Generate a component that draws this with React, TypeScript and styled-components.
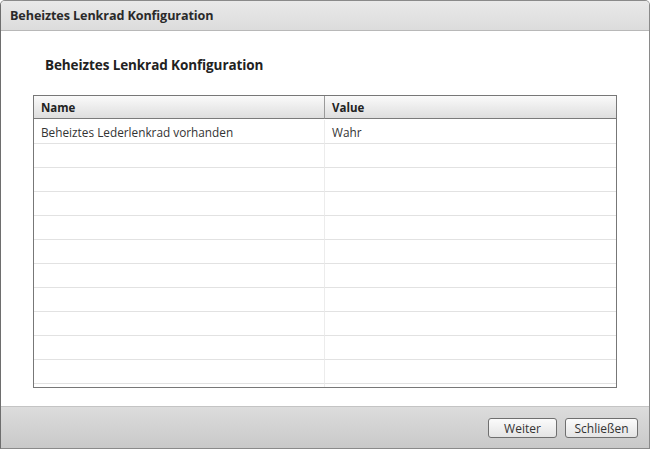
import React from "react";
import styled, { createGlobalStyle } from "styled-components";

const Global = createGlobalStyle`
  html, body { margin: 0; padding: 0; background: #ffffff; }
  body { font-family: "Open Sans", "Noto Sans", sans-serif; color: #333; }
`;

const Window = styled.div`
  width: 650px;
  height: 449px;
  box-sizing: border-box;
  display: flex;
  flex-direction: column;
  border: 1px solid #8a8a8a;
  border-left-color: #6e6e6e;
  border-radius: 5px 5px 0 0;
  overflow: hidden;
  background: #fff;
`;

const TitleBar = styled.div`
  height: 30px;
  flex: none;
  box-sizing: border-box;
  display: flex;
  align-items: center;
  padding-left: 9px;
  background: linear-gradient(#e9e9e9, #dcdcdc);
  border-bottom: 1px solid #b8b8b8;
  font-weight: 700;
  font-size: 12.6px;
  color: #2a2a2a;
  letter-spacing: -0.1px;
`;

const Body = styled.div`
  flex: 1;
  display: flex;
  flex-direction: column;
  padding: 24px 32px 0 32px;
`;

const Heading = styled.h1`
  margin: 1px 0 0 12px;
  height: 39px;
  font-size: 13.5px;
  font-weight: 700;
  color: #222;
  letter-spacing: -0.1px;
`;

const Table = styled.div`
  width: 584px;
  box-sizing: border-box;
  border: 1px solid #777;
  display: grid;
  grid-template-columns: 291px 1fr;
  grid-auto-rows: 24px;
  height: 293px;
  overflow: hidden;
`;

const HeadCell = styled.div<{ $last?: boolean }>`
  height: 23px;
  box-sizing: border-box;
  display: flex;
  align-items: center;
  padding-left: 7px;
  font-size: 11.5px;
  font-weight: 700;
  color: #222;
  background: linear-gradient(#fafafa, #dedede);
  border-bottom: 1px solid #7a7a7a;
  border-right: ${(p) => (p.$last ? "none" : "1px solid #9a9a9a")};
`;

const Cell = styled.div<{ $last?: boolean }>`
  box-sizing: border-box;
  display: flex;
  align-items: center;
  padding-left: 7px;
  font-size: 11.8px;
  color: #333;
  border-bottom: 1px solid #e2e2e2;
  border-right: ${(p) => (p.$last ? "none" : "1px solid #ececec")};
`;

const Footer = styled.div`
  height: 42px;
  flex: none;
  box-sizing: border-box;
  display: flex;
  justify-content: flex-end;
  align-items: center;
  gap: 8px;
  padding: 0 11px 0 0;
  background: linear-gradient(#dcdcdc, #c9c9c9);
  border-top: 1px solid #c4c4c4;
`;

const Button = styled.button<{ $w: number }>`
  width: ${(p) => p.$w}px;
  height: 20px;
  margin-top: 1px;
  box-sizing: border-box;
  border: 1px solid #6f6f6f;
  border-radius: 3px;
  background: linear-gradient(#fbfbfb, #e4e4e4);
  font-family: "Open Sans", "Noto Sans", sans-serif;
  font-size: 12px;
  color: #333;
  padding: 0;
`;

const rows: [string, string][] = [["Beheiztes Lederlenkrad vorhanden", "Wahr"]];
for (let i = 0; i < 11; i++) rows.push(["", ""]);

export default function App() {
  return (
    <>
      <Global />
      <Window>
        <TitleBar>Beheiztes Lenkrad Konfiguration</TitleBar>
        <Body>
          <Heading>Beheiztes Lenkrad Konfiguration</Heading>
          <Table>
            <HeadCell>Name</HeadCell>
            <HeadCell $last>Value</HeadCell>
            {rows.map((r, i) => (
              <React.Fragment key={i}>
                <Cell>{r[0]}</Cell>
                <Cell $last>{r[1]}</Cell>
              </React.Fragment>
            ))}
          </Table>
        </Body>
        <Footer>
          <Button $w={69}>Weiter</Button>
          <Button $w={73}>Schließen</Button>
        </Footer>
      </Window>
    </>
  );
}
